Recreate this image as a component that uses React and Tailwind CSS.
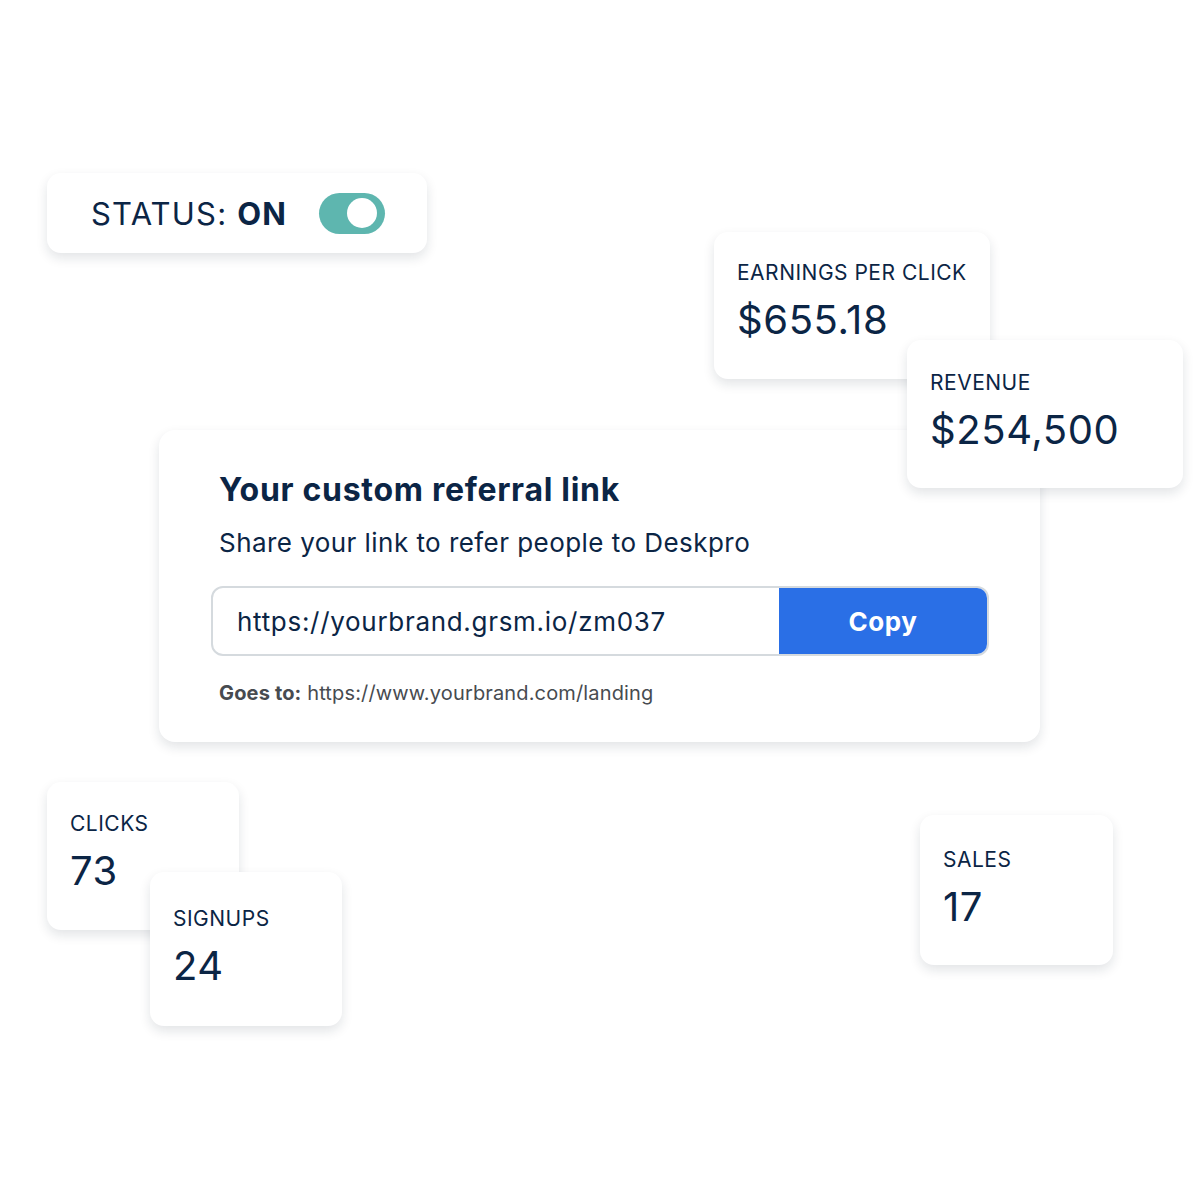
import React from "react";

const card = "absolute bg-white rounded-[14px] shadow-[0_5px_12px_rgba(15,30,50,0.12)]";

const StatCard = ({ label, value, className }) => (
    <div className={`${card} ${className} px-[23px] pt-[31px]`}>
        <div className="text-[21px] leading-5 tracking-[0.5px] text-[#0b2545]">{label}</div>
        <div className="mt-[17px] text-[40px] leading-10 tracking-[0.6px] text-[#0b2545]">{value}</div>
    </div>
);

const App = () => {
    return (
        <div className="relative w-[1200px] h-[1199px] bg-white overflow-hidden font-['Inter',sans-serif]">
            {/* status pill */}
            <div className={`${card} left-[47px] top-[173px] w-[380px] h-[80px] flex items-center pl-[44px]`}>
                <span className="text-[31px] leading-none text-[#0b2545] tracking-[1.2px]">
                    STATUS: <span className="font-bold">ON</span>
                </span>
                <div className="ml-[32px] w-[66px] h-[41px] rounded-full bg-[#5eb6af] flex items-center justify-end pr-[8px]">
                    <div className="w-[30px] h-[30px] rounded-full bg-white" />
                </div>
            </div>

            <StatCard label="EARNINGS PER CLICK" value="$655.18" className="left-[714px] top-[232px] w-[276px] h-[147px]" />

            {/* referral card */}
            <div className={`${card} rounded-[16px] left-[159px] top-[430px] w-[881px] h-[312px] pl-[52px] pr-[51px] pt-[44px]`}>
                <h2 className="ml-2 text-[32px] leading-8 font-bold text-[#0b2545] tracking-[0.7px]">
                    Your custom referral link
                </h2>
                <p className="ml-2 mt-[24px] text-[26px] leading-[26px] tracking-[0.45px] text-[#0b2545]">
                    Share your link to refer people to Deskpro
                </p>
                <div className="mt-[30px] flex h-[70px] rounded-[12px] border-2 border-[#d5dade] overflow-hidden">
                    <div className="flex-1 flex items-center pl-[24px] text-[26px] tracking-[0.7px] text-[#0b2545]">
                        https://yourbrand.grsm.io/zm037
                    </div>
                    <button className="w-[208px] bg-[#2a6fe6] text-white text-[26px] font-bold tracking-[0.5px]">
                        Copy
                    </button>
                </div>
                <p className="ml-2 mt-[27px] text-[20px] leading-5 tracking-[0.15px] text-[#474b50]">
                    <span className="font-bold">Goes to:</span> https://www.yourbrand.com/landing
                </p>
            </div>

            <StatCard label="REVENUE" value="$254,500" className="left-[907px] top-[340px] w-[276px] h-[148px] pt-[33px]" />

            <StatCard label="CLICKS" value="73" className="left-[47px] top-[782px] w-[192px] h-[148px] pt-[32px]" />
            <StatCard label="SIGNUPS" value="24" className="left-[150px] top-[872px] w-[192px] h-[154px] pt-[37px]" />
            <StatCard label="SALES" value="17" className="left-[920px] top-[815px] w-[193px] h-[150px] pt-[35px]" />
        </div>
    );
};

export default App;
